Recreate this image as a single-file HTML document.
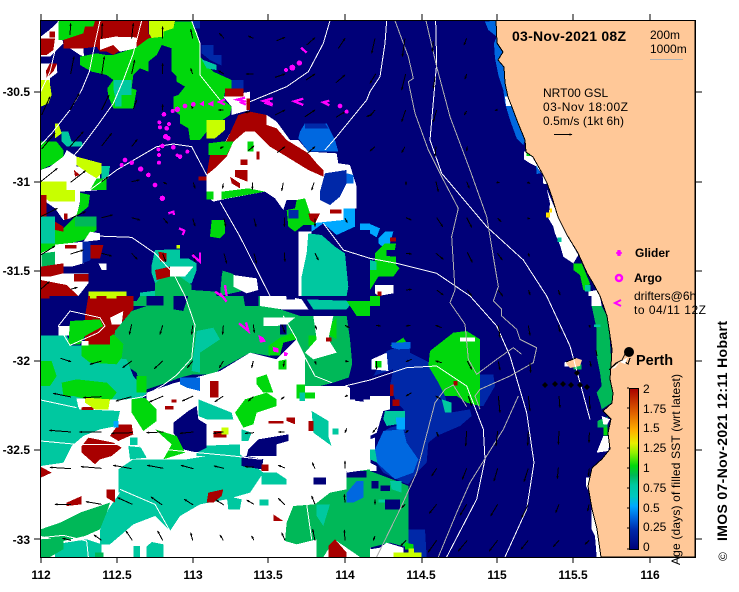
<!DOCTYPE html>
<html><head><meta charset="utf-8"><style>
html,body{margin:0;padding:0;background:#fff}
svg{display:block}
text{font-family:"Liberation Sans",sans-serif;font-size:12px;fill:#000}
.bd{font-weight:bold}
.n{fill:#000078}.b{fill:#0028a8}.u{fill:#0068e0}.c{fill:#00a8ff}.t{fill:#00c8a0}.m{fill:#00b858}.g{fill:#00d80c}.r{fill:#a80000}.l{fill:#c8ff00}.w{fill:#fff}.y{fill:#ffe000}
.map{shape-rendering:crispEdges}
.wl polyline{fill:none;stroke:#fff;stroke-width:3;shape-rendering:crispEdges}
.gl polyline{fill:none;stroke:#b0b0b0;stroke-width:3;shape-rendering:crispEdges}
.ar path{fill:none;stroke:#000;stroke-width:3;marker-end:url(#h);shape-rendering:crispEdges}
.mg circle,.mg polygon{fill:#ff00ff}
.mg polyline{fill:none;stroke:#ff00ff;stroke-width:7}
</style></head><body>
<svg width="739" height="592" viewBox="0 0 739 592" xmlns="http://www.w3.org/2000/svg">
<defs>
<marker id="h" markerWidth="3.2" markerHeight="2.4" refX="2.6" refY="1.2" orient="auto" markerUnits="strokeWidth"><path d="M0 0L3.2 1.2L0 2.4z" fill="#000"/></marker>
<clipPath id="cp"><rect x="41" y="20" width="654" height="537"/></clipPath>
<linearGradient id="cb" x1="0" y1="1" x2="0" y2="0">
<stop offset="0" stop-color="#000078"/><stop offset=".12" stop-color="#0028a8"/><stop offset=".2" stop-color="#0068e0"/><stop offset=".27" stop-color="#00a8ff"/><stop offset=".33" stop-color="#00c8c0"/><stop offset=".4" stop-color="#00c8a0"/><stop offset=".46" stop-color="#00b858"/><stop offset=".52" stop-color="#00d80c"/><stop offset=".6" stop-color="#90f000"/><stop offset=".66" stop-color="#e8f000"/><stop offset=".74" stop-color="#ffb000"/><stop offset=".85" stop-color="#e06000"/><stop offset="1" stop-color="#a80000"/>
</linearGradient>
</defs>
<rect width="739" height="592" fill="#fff"/>
<g clip-path="url(#cp)">
<rect x="41" y="20" width="654" height="537" class="n map"/>

<!-- Q1 -->
<g class="map" transform="scale(.33333)">
<polygon class="w" points="148,90 175,65 190,130 150,170 122,170 122,110"/>
<polygon class="r" points="122,115 165,115 160,150 140,165 122,165"/>
<polygon class="r" points="148,95 165,95 165,112 148,112"/>
<polygon class="w" points="122,190 170,190 172,218 150,235 150,265 122,265"/>
<polygon class="r" points="150,190 172,190 160,215 140,235 138,212"/>
<polygon class="l" points="122,240 148,240 155,285 145,310 122,320"/>
<polygon class="g" points="175,62 285,62 280,80 255,82 250,100 215,115 190,120 175,120"/>
<polygon class="r" points="190,120 250,100 255,80 280,80 285,62 445,62 445,100 455,115 410,140 390,125 385,150 355,155 340,165 320,155 300,155 290,140 250,145 190,145"/>
<polygon class="w" points="300,118 345,110 410,112 410,145 360,155 340,135 300,150"/>
<polygon class="w" points="210,145 250,145 252,170 240,165"/>
<polygon class="l" points="447,62 525,62 520,85 490,95 490,110 455,115 447,100"/>
<polygon class="g" points="445,115 490,110 490,95 520,85 525,65 575,65 590,95 600,130 600,170 640,215 695,240 695,265 675,275 670,300 695,320 690,345 660,365 625,365 620,395 600,420 570,420 565,385 540,370 540,345 520,330 520,290 535,285 555,260 530,245 530,230 515,215 515,145 485,135 470,165 445,185 445,215 420,205 400,225 395,265 410,270 400,325 365,325 340,325 325,290 322,265 340,240 320,225 275,215 240,195 240,170 265,165 290,160 320,165 340,165 385,150 405,145"/>
<polygon class="t" points="340,240 395,240 395,285 365,285 365,320 345,320 345,290 340,265"/>
<polygon class="b" points="605,135 640,135 640,165 665,165 665,197 630,180 605,160"/>
<polygon class="t" points="605,178 650,195 650,210 620,205"/>
<polygon class="b" points="695,240 730,240 730,265 695,265"/>
<polygon class="b" points="575,62 600,62 600,85 585,85"/>
<polygon class="w" points="620,590 620,525 690,400 720,345 800,345 830,365 870,420 895,420 925,455 1010,460 1015,490 1050,495 1070,560 1070,625 1030,625 1040,680 1010,705 970,670 935,670 945,640 930,640 915,595 890,600 860,600 850,630 825,595 795,575 670,598 640,605"/>
<polygon class="w" points="670,290 750,275 750,330 695,345 695,320"/>
<polygon class="r" points="675,265 730,265 730,290 675,290"/>
<polygon class="r" points="740,295 750,295 750,330 740,330"/>
<polygon class="r" points="620,525 630,465 675,430 690,400 715,345 750,335 800,345 800,375 830,385 860,420 925,460 950,490 970,510 970,530 925,510 860,470 810,440 765,395 735,395 700,425 680,470 650,500"/>
<polygon class="g" points="625,430 665,425 700,425 680,465 625,465"/>
<polygon class="l" points="620,360 675,360 675,390 645,415 620,415"/>
<polygon class="r" points="722,478 742,478 742,495 722,495"/>
<polygon class="r" points="705,510 742,510 742,545 705,530"/>
<polygon class="r" points="770,455 778,455 778,478 770,478"/>
<polygon class="r" points="595,530 620,530 620,542 595,542"/>
<polygon class="r" points="690,530 720,550 720,565 695,550"/>
<polygon class="g" points="742,425 760,425 760,455 742,455"/>
<polygon class="g" points="665,575 745,565 795,575 665,598"/>
<polygon class="g" points="620,575 640,575 640,598 620,598"/>
<polygon class="u" points="900,395 915,370 980,370 1005,420 1015,455 975,455 925,455 895,415"/>
<polygon class="b" points="915,370 975,370 985,385 915,385"/>
<polygon class="b" points="975,520 1040,510 1040,550 1020,590 990,615 960,600 960,575"/>
<polygon class="u" points="1040,520 1060,525 1060,550 1040,550"/>
<polygon class="c" points="1030,625 1065,625 1065,680 1010,705 970,670 935,695 935,670 1030,660"/>
<polygon class="g" points="860,630 885,625 890,600 915,595 930,640 955,640 945,675 910,675 885,695 865,680"/>
<polygon class="b" points="865,630 895,630 895,655 865,655"/>
<polygon class="r" points="925,640 960,640 945,670 930,660"/>
<polygon class="r" points="990,628 1025,628 1025,640 990,640"/>
<polygon class="w" points="895,695 935,695 920,760 905,830 905,888 895,888"/>
<polygon class="t" points="925,700 965,705 1005,740 1035,760 1045,860 1040,888 905,888 905,830 920,760"/>
<polygon class="c" points="1080,670 1110,670 1110,690 1080,690"/>
<polygon class="g" points="635,660 675,660 675,700 660,715 630,710"/>
<polygon class="g" points="122,425 170,425 190,450 190,490 165,490 122,510"/>
<polygon class="l" points="165,370 175,370 185,400 165,415"/>
<polygon class="t" points="185,395 205,395 215,425 245,425 250,440 200,440 185,425"/>
<polygon class="w" points="122,510 150,500 190,470 200,450 230,470 230,500 300,490 300,570 240,575 240,605 230,650 190,660 165,625 122,595"/>
<polygon class="l" points="230,470 305,490 305,520 290,535 265,520 230,495"/>
<polygon class="t" points="305,498 330,498 325,535 305,540"/>
<polygon class="g" points="290,535 320,535 320,570 270,570"/>
<polygon class="l" points="122,545 200,545 200,570 225,570 225,605 150,605 122,585"/>
<polygon class="g" points="240,578 270,585 265,620 228,650 240,610"/>
<polygon class="r" points="122,585 140,585 140,650 122,650"/>
<polygon class="r" points="222,510 240,525 225,530"/>
<polygon class="t" points="122,650 165,650 165,730 122,730"/>
<polygon class="g" points="165,675 190,685 225,650 290,650 290,690 250,720 190,735 165,735"/>
<polygon class="m" points="225,650 290,650 290,680 225,680"/>
<polygon class="r" points="165,665 190,680 190,695 165,690"/>
<polygon class="r" points="192,640 202,640 202,658 192,658"/>
<polygon class="w" points="122,760 155,735 250,725 270,695 300,700 300,720 255,725 250,790 215,800 122,800"/>
<polygon class="g" points="122,730 165,730 165,740 122,760"/>
<polygon class="m" points="125,760 165,755 165,800 125,800"/>
<polygon class="r" points="195,735 230,735 230,745 195,745"/>
<polygon class="r" points="122,800 190,790 190,820 150,830 122,830"/>
<polygon class="w" points="122,830 150,830 190,820 265,820 265,850 235,888 122,888"/>
<polygon class="r" points="222,822 265,822 265,845 222,845"/>
<polygon class="r" points="122,840 200,855 235,888 122,888"/>
<polygon class="r" points="265,735 310,735 300,775 265,775"/>
<polygon class="b" points="248,725 272,725 272,780 248,790"/>
<polygon class="w" points="295,790 320,790 320,810 305,810"/>
<polygon class="l" points="265,875 380,875 380,888 265,888"/>
<polygon class="t" points="465,750 540,748 540,775 565,775 590,790 590,810 575,850 465,850 455,820 455,795"/>
<polygon class="m" points="465,850 490,830 540,830 575,855 575,888 465,888"/>
<polygon class="r" points="475,755 500,760 500,785 480,785"/>
<polygon class="r" points="465,810 510,800 510,830 470,840"/>
<polygon class="w" points="510,800 580,800 555,830 510,830"/>
<polygon class="l" points="530,735 540,735 540,745 530,745"/>
<polygon class="m" points="575,870 650,875 650,888 575,888"/>
<polygon class="m" points="668,812 700,822 700,860 740,870 660,888 665,830"/>
<polygon class="w" points="700,825 770,835 775,870 740,880 700,860"/>
<polygon class="t" points="420,878 465,872 465,888 420,888"/>
</g>

<!-- Q2 -->
<g class="map" transform="translate(370,0) scale(.33333)">
<polygon class="c" points="0,672 30,685 20,712 0,700"/>
<polygon class="c" points="25,715 45,695 70,695 60,730 50,750 25,730"/>
<polygon class="r" points="60,713 78,713 78,725 60,725"/>
<polygon class="g" points="45,730 78,730 75,750 50,750 50,768 78,770 78,795 88,805 70,830 25,830 0,870 0,790 15,790 15,760"/>
<polygon class="t" points="0,780 20,785 20,810 0,810"/>
<polygon class="w" points="15,855 70,855 70,880 25,888 15,880"/>
<polygon class="r" points="22,875 35,875 35,888 22,888"/>
<polygon class="u" points="345,65 378,62 380,130 400,155 385,180 403,200 405,250 415,290 425,320 445,370 465,420 460,435 440,415 420,360 405,310 400,270 385,225 375,175 372,130 380,110 355,90"/>
<polygon class="w" points="405,290 418,290 425,318 408,318"/>
<polygon class="w" points="462,455 478,455 515,520 500,500 480,490 462,478"/>
<polygon class="g" points="470,455 482,455 482,468 470,468"/>
<polygon class="u" points="498,495 512,520 500,522"/>
<polygon class="w" points="518,530 528,530 530,552 520,552"/>
<polygon class="w" points="530,565 540,590 565,650 590,705 625,765 610,790 580,770 570,735 555,700 550,680 535,655 540,610"/>
<polygon class="y" points="528,638 540,638 540,652 528,652"/>
<polygon class="y" points="538,626 546,626 546,638 538,638"/>
<polygon class="t" points="562,712 574,712 574,726 562,726"/>
<polygon class="g" points="610,790 635,790 660,850 650,875 640,870 630,825 610,810"/>
<polygon class="w" points="655,875 680,870 690,888 655,888"/>
<polygon class="t" points="645,855 662,855 662,875 645,875"/>
</g>

<!-- Q3 -->
<g class="map" transform="translate(0,296) scale(.33333)">
<rect x="122" y="310" width="990" height="475" class="w"/>
<polygon class="n" points="122,0 260,0 260,40 175,90 175,115 122,115"/>
<polygon class="w" points="175,90 210,90 210,118 175,118"/>
<polygon class="r" points="265,0 400,0 400,40 365,80 365,110 330,145 255,145 255,60"/>
<polygon class="w" points="330,65 370,45 365,85 335,85"/>
<polygon class="l" points="270,0 290,0 290,8 270,8"/>
<polygon class="l" points="320,0 350,0 350,8 320,8"/>
<polygon class="r" points="122,0 148,0 148,8 122,8"/>
<polygon class="m" points="345,105 395,45 440,30 560,5 780,5 840,40 900,60 1040,60 1050,130 1060,240 1000,260 960,270 915,270 915,180 890,130 850,140 810,180 750,170 660,220 640,235 600,235 580,235 540,245 500,260 440,280 415,250 410,230 350,190 340,150"/>
<polygon class="m" points="400,0 780,0 780,30 400,30"/>
<polygon class="t" points="122,118 200,118 215,148 250,148 300,180 380,190 400,240 440,290 425,310 122,310"/>
<polygon class="g" points="122,195 155,195 170,240 150,270 122,270"/>
<polygon class="g" points="245,145 300,140 340,115 370,145 365,185 350,205 270,200 245,180"/>
<polygon class="g" points="210,75 300,70 310,90 255,120 240,145 205,145"/>
<polygon class="r" points="255,120 310,95 330,115 330,145 255,145"/>
<polygon class="w" points="245,135 265,135 265,148 245,148"/>
<polygon class="g" points="185,260 230,250 320,260 350,290 335,310 260,310 220,300 190,300"/>
<polygon class="g" points="410,240 440,240 440,290 410,290"/>
<polygon class="t" points="590,105 640,95 660,130 600,170 600,230 575,225 580,180"/>
<polygon class="t" points="920,10 1060,15 1040,40 940,40"/>
<polygon class="g" points="1040,15 1110,15 1110,60 1070,60"/>
<polygon class="g" points="985,90 1010,65 1010,130 985,115"/>
<polygon class="g" points="925,118 950,118 950,150 925,150"/>
<polygon class="g" points="805,150 840,125 880,110 890,130 850,140 840,178 805,178"/>
<polygon class="w" points="790,65 885,65 860,85 830,90 790,90"/>
<polygon class="w" points="780,0 855,0 905,10 925,40 845,40 780,30"/>
<polygon class="w" points="940,60 1000,60 985,130 1010,170 940,190 915,170 950,130"/>
<polygon class="r" points="978,125 995,125 995,137 978,137"/>
<polygon class="r" points="868,148 880,148 880,158 868,158"/>
<polygon class="w" points="660,225 750,170 830,190 890,130 915,180 915,270 960,270 1050,270 1050,310 660,310"/>
<polygon class="w" points="440,290 520,262 660,225 660,310 440,310"/>
<polygon class="g" points="835,195 860,190 860,220 835,220"/>
<polygon class="g" points="770,245 800,235 820,290 790,290 770,265"/>
<polygon class="g" points="890,265 915,265 915,290 945,290 945,308 890,308"/>
<polygon class="t" points="898,290 915,290 915,315 898,315"/>
<polygon class="n" points="1060,190 1110,100 1110,310 1040,270"/>
<polygon class="n" points="1065,310 1090,310 1090,340 1065,340"/>
<polygon class="n" points="1070,395 1100,395 1100,435 1060,435"/>
<polygon class="t" points="122,305 228,305 238,340 360,345 350,390 300,400 250,420 215,450 190,500 122,510"/>
<polygon class="t" points="390,425 412,425 412,447 390,447"/>
<polygon class="t" points="385,450 420,450 440,485 390,490"/>
<polygon class="t" points="355,590 355,520 400,490 560,490 650,475 720,450 720,475 790,530 750,590 680,610 600,625 540,660 510,705 465,660 400,685 320,700 305,710 300,690 325,640 360,590"/>
<polygon class="t" points="590,450 720,445 720,480 590,480"/>
<polygon class="t" points="785,530 830,530 860,550 860,565 785,565"/>
<polygon class="t" points="680,600 725,610 720,640 685,640"/>
<polygon class="t" points="778,610 805,610 805,628 778,628"/>
<polygon class="t" points="595,310 695,350 700,370 620,370 595,360"/>
<polygon class="t" points="725,400 755,410 745,435 725,435"/>
<polygon class="m" points="122,700 180,680 240,650 330,620 320,650 300,700 255,720 190,735 122,720"/>
<polygon class="t" points="165,745 260,730 305,745 305,783 165,783"/>
<polygon class="t" points="300,700 400,685 330,745 300,745"/>
<polygon class="m" points="122,730 190,725 190,760 150,783 122,783"/>
<polygon class="m" points="285,770 310,770 310,783 285,783"/>
<rect x="400" y="750" width="20" height="33" class="t"/>
<polygon class="t" points="440,752 455,738 490,745 490,783 440,783"/>
<polygon class="m" points="860,680 880,630 945,625 990,590 1040,580 1040,530 1110,520 1110,783 1080,783 1010,735 985,760 970,783 950,783 950,730 890,745 855,735"/>
<polygon class="u" points="1040,590 1070,555 1090,555 1090,605 1060,620 1040,620"/>
<polygon class="t" points="950,625 990,625 970,690 950,660"/>
<polygon class="n" points="1040,525 1100,525 1100,545 1040,545"/>
<polygon class="r" points="985,783 985,750 1005,730 1040,770 1040,783"/>
<polygon class="n" points="520,380 565,345 590,330 595,370 620,385 620,455 590,470 550,460 520,410"/>
<polygon class="g" points="395,310 435,305 470,340 470,375 430,405 395,350"/>
<polygon class="g" points="465,400 530,420 555,470 490,490 515,445"/>
<polygon class="g" points="705,350 735,310 800,290 830,310 830,330 770,350 760,385 730,395"/>
<polygon class="n" points="725,485 740,480 790,490 785,520 725,510"/>
<polygon class="n" points="740,480 745,460 775,430 865,415 865,435 830,445 830,480"/>
<polygon class="t" points="935,345 985,375 985,420 995,450 940,410"/>
<polygon class="t" points="998,397 1015,397 1015,415 998,415"/>
<polygon class="r" points="245,450 265,425 340,440 365,455 335,480 300,490 285,505 245,470"/>
<polygon class="r" points="355,385 395,385 400,415 355,435 330,420"/>
<polygon class="r" points="625,590 670,580 665,600 640,620 620,620"/>
<polygon class="r" points="320,580 345,580 345,620 320,605"/>
<polygon class="r" points="200,620 245,600 245,625 200,630"/>
<polygon class="r" points="122,512 155,530 122,545"/>
<polygon class="r" points="640,405 680,405 680,425 640,425"/>
<polygon class="r" points="805,375 850,375 850,383 805,383"/>
<polygon class="r" points="860,365 885,365 885,385 860,375"/>
<polygon class="r" points="925,375 940,375 940,405 925,405"/>
<polygon class="r" points="630,255 655,255 655,305 630,305"/>
<polygon class="r" points="495,330 520,330 520,340 495,340"/>
<polygon class="r" points="515,310 530,310 530,320 515,320"/>
<polygon class="r" points="820,655 850,675 820,675"/>
<polygon class="r" points="785,505 805,505 805,525 785,525"/>
<polygon class="r" points="245,333 280,333 280,342 245,342"/>
<polygon class="w" points="230,308 255,308 255,333 235,335"/>
<polygon class="w" points="330,312 395,312 395,345 360,345"/>
<polygon class="l" points="255,305 330,310 325,340 285,340 255,320"/>
<polygon class="l" points="665,395 685,395 685,415 665,415"/>
<polygon class="u" points="540,245 600,245 600,285 560,275 540,265"/>
<polygon class="c" points="340,375 355,375 355,395 340,395"/>
<polygon class="n" points="940,545 978,545 978,565 940,565"/>
<polygon class="n" points="440,0 490,0 490,28 440,28"/>
<polygon class="n" points="520,0 565,0 550,45 520,40"/>
<polygon class="n" points="730,0 775,0 775,30 735,30"/>
<polygon class="n" points="860,0 885,0 885,10 860,10"/>
<polygon class="n" points="840,85 860,85 860,115 840,115"/>
<polygon class="n" points="400,0 420,0 410,15 400,15"/>
<polygon class="w" points="1050,312 1110,320 1110,520 1040,530 1050,430"/>
</g>

<!-- Q4 -->
<g class="map" transform="translate(370,296) scale(.33333)">
<polygon class="g" points="0,0 30,0 30,30 0,30"/>
<polygon class="w" points="0,300 60,300 60,340 40,345 20,410 0,420"/>
<polygon class="b" points="50,165 120,140 120,170 180,200 205,260 225,300 240,350 300,340 305,360 270,390 200,420 175,440 170,500 140,530 115,565 100,560 40,530 20,500 15,460 40,405 60,395 100,385 100,340 80,320 60,270 70,220 10,240"/>
<polygon class="w" points="5,190 50,170 55,225 5,220"/>
<rect x="15" y="195" width="20" height="20" class="g"/>
<polygon class="g" points="60,150 100,125 110,140 80,150"/>
<polygon class="u" points="65,140 122,138 122,158 85,160 65,155"/>
<polygon class="b" points="330,235 370,235 375,270 340,330 330,330"/>
<polygon class="g" points="180,165 250,110 290,105 330,130 330,230 330,330 290,320 260,300 225,300 205,260 175,210"/>
<rect x="270" y="125" width="45" height="12" class="w"/>
<polygon class="t" points="215,310 245,320 245,350 225,350"/>
<polygon class="u" points="15,460 40,405 100,400 110,440 145,490 130,530 75,550 20,500"/>
<polygon class="t" points="45,345 105,345 105,365 80,385 50,390 40,370"/>
<polygon class="c" points="78,365 105,365 105,400 80,400"/>
<polygon class="m" points="0,525 80,555 115,570 115,700 115,755 60,740 0,755"/>
<polygon class="b" points="115,700 165,700 170,783 115,783"/>
<rect x="5" y="555" width="20" height="23" class="n"/>
<rect x="32" y="568" width="28" height="17" class="n"/>
<rect x="45" y="610" width="45" height="30" class="n"/>
<polygon class="t" points="60,555 95,555 95,590 65,580"/>
<polygon class="t" points="25,610 45,610 45,620 25,620"/>
<polygon class="w" points="0,500 20,510 20,525 0,525"/>
<polygon class="w" points="0,430 15,425 15,460 0,470"/>
<polygon class="t" points="0,460 15,460 22,500 0,490"/>
<polygon class="w" points="0,760 30,755 50,740 100,755 100,770 70,770 70,783 0,783"/>
<polygon class="g" points="105,740 130,745 130,760 105,760"/>
<polygon class="l" points="70,770 155,770 155,783 70,783"/>
<polygon class="l" points="115,758 132,758 132,770 115,770"/>
<rect x="60" y="265" width="10" height="35" class="r"/>
<rect x="68" y="310" width="20" height="20" class="r"/>
<rect x="250" y="255" width="12" height="13" class="r"/>
<polygon class="w" points="665,0 690,0 695,30 665,30"/>
<polygon class="m" points="665,30 695,30 715,70 720,140 725,210 725,250 730,290 725,320 695,340 690,320 680,290 695,270 690,230 680,180 680,100"/>
<rect x="672" y="85" width="20" height="8" class="t"/>
<polygon class="m" points="682,375 712,362 712,395 682,395"/>
<polygon class="g" points="700,395 712,395 712,418 700,418"/>
<polygon class="w" points="695,360 720,370 712,385 700,385"/>
<polygon class="w" points="700,420 722,420 715,465 680,470"/>
<polygon class="w" points="648,545 660,545 660,595 648,570"/>
<polygon class="w" points="665,640 680,700 692,783 680,783 675,720 665,700"/>
<polygon class="w" points="583,200 600,192 600,212 583,212"/>
<rect x="610" y="205" width="25" height="16" class="m"/>
</g>

<!-- land -->
<polygon fill="#ffc898" stroke="#000" stroke-width="1" shape-rendering="crispEdges" points="496,20 497,43 503,52 498,60 504,67 505,83 508,97 512,107 518,123 525,140 526,152 533,157 542,173 547,183 552,197 558,217 567,235 578,253 587,273 593,283 600,296 607,316 609,329 612,349 611,366 610,379 613,393 612,403 603,411 611,419 608,433 610,449 602,459 592,468 588,486 592,509 597,529 601,557 695,557 695,20"/>
<polygon fill="#ffc898" points="566,363 576,358 582,360 580,366 570,368"/>

<!-- contours -->
<g class="wl" transform="scale(.33333)">
<polyline points="175,62 168,140 150,215 122,275"/>
<polyline points="300,62 285,130 268,215 245,270 210,330 155,400 122,435"/>
<polyline points="425,62 400,160 370,240 340,310 290,380 245,440 210,480"/>
<polyline points="575,62 600,130 600,225 660,300"/>
<polyline points="750,305 860,260 925,215 970,130 990,62"/>
<polyline points="975,450 1010,410 1100,300 1110,275 1140,230 1155,130 1160,62"/>
<polyline points="270,570 350,510 470,440 520,432 575,440 620,525"/>
<polyline points="660,605 720,710 810,888"/>
<polyline points="290,708 395,712 465,760 520,820 555,888 585,975 575,1075 530,1125 490,1155 430,1190 350,1205"/>
<polyline points="970,670 1030,750 1110,775 1190,790 1310,820 1410,888 1490,978 1530,1068 1580,1238 1602,1388 1580,1528 1515,1671"/>
<polyline points="1307,62 1310,190 1290,420 1325,520 1460,680 1570,780 1640,888 1710,1038 1770,1258"/>
<polyline points="850,948 890,1018"/>
<polyline points="910,1063 945,1128 995,1148"/>
<polyline points="1035,1158 1110,1140 1220,1103 1310,1098 1400,1158 1450,1288 1455,1378 1430,1498 1340,1671"/>
</g>
<g class="wl" transform="translate(0,296) scale(.33333)">
<polyline points="175,90 210,45 300,65 315,90 295,110 210,148 175,90"/>
<polyline points="122,312 230,335"/>
<polyline points="122,435 230,445 350,445 540,465 700,480 785,490"/>
<polyline points="360,580 465,625 510,705"/>
<polyline points="122,725 190,718 260,735 265,783"/>
<polyline points="920,625 935,730"/>
</g>
<g class="gl" transform="translate(370,0) scale(.33333)">
<polyline points="75,62 115,170 130,235 115,245 135,340 175,450 215,530 265,625 245,710 255,870 240,908 285,973 295,1078 320,1123 380,1078 430,1043 455,1063"/>
<polyline points="168,62 200,200 240,350 300,510 350,650 385,860 370,903 395,928 395,948 440,988 450,1018 500,1043 490,1088 420,1128 330,1168 315,1188 330,1228"/>
<polyline points="445,1188 400,1288 300,1448 260,1538 205,1671"/>
<polyline points="225,1168 195,1208 140,1418 90,1528 20,1671"/>
<polyline points="225,1168 250,1155 290,1220"/>
</g>

<!-- arrows -->
<g class="ar" transform="scale(.33333)">
<path d="M210 105L212 70"/><path d="M305 115L307 70"/><path d="M395 115L400 70"/><path d="M487 115L488 80"/><path d="M578 115L572 88"/><path d="M672 115L658 100"/><path d="M760 115L745 108"/><path d="M830 122L855 112"/><path d="M920 135L945 113"/><path d="M1015 145L1035 115"/>
<path d="M212 222L222 170"/><path d="M305 225L313 170"/><path d="M395 222L404 180"/><path d="M488 222L488 190"/><path d="M578 222L572 205"/><path d="M672 222L655 212"/><path d="M760 222L738 222"/><path d="M825 232L855 222"/><path d="M918 240L945 222"/><path d="M1008 248L1035 225"/>
<path d="M125 345L150 290"/><path d="M210 330L238 280"/><path d="M305 330L327 285"/><path d="M400 327L410 300"/><path d="M488 332L488 313"/><path d="M578 325L575 318"/><path d="M670 330L655 330"/><path d="M750 335L735 338"/><path d="M825 345L855 330"/><path d="M915 350L945 330"/><path d="M1008 352L1035 335"/><path d="M1100 350L1110 345"/>
<path d="M125 447L165 400"/><path d="M210 440L250 395"/><path d="M305 438L335 400"/><path d="M395 440L412 418"/><path d="M660 445L670 440"/><path d="M745 452L762 438"/><path d="M832 458L855 440"/><path d="M922 460L945 440"/>
<path d="M122 545L172 505"/><path d="M212 547L257 512"/><path d="M305 545L325 530"/><path d="M395 545L418 540"/><path d="M490 547L500 552"/><path d="M580 548L585 565"/><path d="M670 550L668 565"/><path d="M757 548L757 568"/><path d="M850 548L845 572"/><path d="M942 548L935 570"/>
<path d="M122 650L172 625"/><path d="M212 655L257 635"/><path d="M305 653L338 645"/><path d="M395 653L420 660"/><path d="M490 655L503 670"/><path d="M578 655L585 678"/><path d="M672 655L677 680"/><path d="M762 655L768 680"/><path d="M853 653L853 680"/><path d="M945 655L945 680"/><path d="M1035 655L1042 668"/>
<path d="M122 765L165 738"/><path d="M212 762L250 750"/><path d="M305 760L335 768"/><path d="M395 760L412 778"/><path d="M488 760L497 785"/><path d="M580 760L585 785"/><path d="M672 760L680 790"/><path d="M762 760L770 790"/><path d="M853 758L855 785"/><path d="M945 760L955 780"/>
<path d="M122 868L148 845"/><path d="M212 868L232 862"/>
</g>
<g class="ar" transform="translate(370,0) scale(.33333)">
<path d="M15 115L5 160"/><path d="M105 115L97 170"/><path d="M190 125L187 155"/><path d="M290 115L282 135"/>
<path d="M17 222L0 250"/><path d="M107 222L95 270"/><path d="M195 230L190 265"/><path d="M290 222L285 237"/>
<path d="M15 330L0 348"/><path d="M107 330L95 365"/><path d="M200 330L190 365"/><path d="M290 333L283 345"/><path d="M380 330L375 331"/>
<path d="M15 440L0 453"/><path d="M105 440L95 458"/><path d="M198 440L195 470"/><path d="M292 440L290 453"/>
<path d="M108 545L108 555"/><path d="M198 545L205 575"/><path d="M290 545L298 565"/><path d="M380 547L388 548"/><path d="M472 547L480 550"/>
<path d="M108 653L124 660"/><path d="M200 653L218 680"/><path d="M290 653L305 682"/><path d="M383 655L393 665"/><path d="M472 655L480 656"/>
<path d="M108 760L125 762"/><path d="M198 760L220 778"/><path d="M292 757L307 787"/><path d="M382 760L397 780"/><path d="M475 760L478 770"/>
<path d="M108 870L125 868"/><path d="M200 870L220 885"/><path d="M292 870L305 888"/><path d="M385 870L398 888"/><path d="M476 870L480 885"/><path d="M565 870L570 885"/>
</g>
<g class="ar" transform="translate(0,296) scale(.33333)">
<path d="M395 85L388 115"/><path d="M488 88L480 115"/><path d="M578 88L575 115"/><path d="M670 88L668 115"/><path d="M760 85L763 110"/><path d="M845 85L855 110"/><path d="M945 88L950 100"/><path d="M1035 88L1048 95"/>
<path d="M182 187L213 197"/><path d="M305 195L270 205"/><path d="M395 195L368 215"/><path d="M488 195L463 218"/><path d="M578 195L562 215"/><path d="M670 195L658 215"/><path d="M760 195L755 215"/><path d="M853 195L850 212"/><path d="M945 195L948 205"/><path d="M1035 195L1045 197"/>
<path d="M213 303L160 292"/><path d="M305 302L250 305"/><path d="M395 302L348 315"/><path d="M490 300L448 318"/><path d="M580 300L547 315"/><path d="M670 300L645 317"/><path d="M760 302L745 315"/><path d="M853 302L843 310"/><path d="M1043 298L1035 302"/>
<path d="M213 408L148 403"/><path d="M305 408L238 408"/><path d="M397 410L335 412"/><path d="M490 408L440 410"/><path d="M580 408L540 412"/><path d="M670 408L640 412"/><path d="M762 410L735 412"/><path d="M853 408L835 408"/><path d="M1040 397L1035 410"/>
<path d="M213 518L150 514"/><path d="M305 517L243 512"/><path d="M395 518L340 508"/><path d="M490 517L442 508"/><path d="M580 518L543 508"/><path d="M672 517L642 510"/><path d="M762 513L735 512"/><path d="M855 516L835 508"/><path d="M945 518L937 500"/><path d="M1035 518L1035 495"/>
<path d="M213 625L165 625"/><path d="M305 625L258 617"/><path d="M397 625L353 605"/><path d="M487 627L453 603"/><path d="M580 627L553 610"/><path d="M672 627L648 612"/><path d="M762 625L740 612"/><path d="M855 627L835 607"/><path d="M945 625L935 600"/><path d="M1035 620L1033 595"/>
<path d="M213 733L188 727"/><path d="M305 733L282 717"/><path d="M397 733L378 705"/><path d="M488 733L473 705"/><path d="M578 733L572 710"/><path d="M670 733L660 717"/><path d="M762 733L755 720"/><path d="M855 733L845 710"/><path d="M945 733L938 700"/><path d="M1035 733L1033 702"/>
</g>
<g class="ar" transform="translate(370,296) scale(.33333)">
<path d="M18 88L32 90"/><path d="M122 88L108 90"/><path d="M215 95L197 88"/><path d="M385 88L390 125"/><path d="M475 88L480 118"/><path d="M565 88L570 108"/><path d="M658 88L660 95"/>
<path d="M20 195L20 220"/><path d="M125 190L108 197"/><path d="M215 200L197 195"/><path d="M292 195L305 220"/><path d="M385 197L390 222"/><path d="M480 200L482 230"/><path d="M660 195L663 212"/>
<path d="M125 290L108 300"/><path d="M213 310L197 300"/><path d="M295 300L305 330"/><path d="M385 300L390 350"/><path d="M475 300L480 345"/><path d="M567 300L570 335"/><path d="M658 300L660 340"/>
<path d="M20 395L8 410"/><path d="M115 403L107 410"/><path d="M200 408L205 422"/><path d="M290 405L287 450"/><path d="M383 405L378 450"/><path d="M475 408L473 448"/><path d="M567 405L565 445"/><path d="M658 410L657 440"/>
<path d="M200 517L185 540"/><path d="M290 517L277 550"/><path d="M383 517L372 555"/><path d="M475 517L462 557"/><path d="M565 515L562 548"/><path d="M658 517L655 540"/>
<path d="M15 610L15 625"/><path d="M105 625L95 635"/><path d="M200 625L178 652"/><path d="M290 625L270 658"/><path d="M383 625L362 660"/><path d="M475 625L455 665"/><path d="M567 625L557 650"/><path d="M657 625L653 645"/>
<path d="M15 720L10 733"/><path d="M108 733L92 750"/><path d="M200 733L175 768"/><path d="M292 733L265 765"/><path d="M383 733L358 765"/><path d="M475 733L453 760"/><path d="M567 733L550 752"/><path d="M657 733L645 745"/>
</g>

<!-- glider / drifter marks -->
<g class="mg map" transform="scale(.33333)">
<polyline points="903,143 920,158"/>
<circle cx="898" cy="189" r="8"/><circle cx="877" cy="203" r="9"/><circle cx="858" cy="210" r="6"/>
<circle cx="518" cy="333" r="6"/><circle cx="532" cy="328" r="8"/><circle cx="555" cy="318" r="7"/><circle cx="580" cy="313" r="7"/>
<polygon points="598,312 612,302 612,320"/><polygon points="622,312 640,302 640,320"/>
<polyline points="675,298 658,306 675,314"/>
<polyline points="735,293 712,299 735,305"/><polyline points="738,303 725,308 738,314"/>
<polyline points="818,295 790,303 818,312"/><polyline points="810,305 800,310 818,316"/>
<polyline points="910,296 883,304 910,315"/>
<polyline points="988,302 970,307 988,316"/>
<circle cx="1020" cy="318" r="7"/><circle cx="1040" cy="335" r="6"/>
<circle cx="492" cy="343" r="7"/><circle cx="478" cy="367" r="6"/><circle cx="480" cy="382" r="6"/><circle cx="507" cy="372" r="6"/><circle cx="500" cy="385" r="7"/><circle cx="497" cy="410" r="8"/><circle cx="505" cy="415" r="7"/><circle cx="487" cy="438" r="7"/><circle cx="520" cy="442" r="7"/><circle cx="475" cy="448" r="6"/><circle cx="477" cy="465" r="6"/><circle cx="477" cy="488" r="6"/><circle cx="540" cy="470" r="7"/><circle cx="532" cy="466" r="5"/><circle cx="562" cy="455" r="6"/>
<circle cx="375" cy="480" r="7"/><circle cx="365" cy="495" r="6"/><circle cx="395" cy="488" r="7"/><circle cx="422" cy="507" r="8"/><circle cx="445" cy="525" r="7"/><circle cx="465" cy="555" r="7"/><circle cx="487" cy="595" r="8"/>
<polyline points="505,640 520,635 522,645"/><polyline points="537,685 553,692 548,705"/>
<polyline points="577,765 600,785 600,757"/>
<polyline points="645,875 665,888"/><polyline points="675,855 680,888"/>
<polyline points="660,880 680,905"/>
<polyline points="717,970 745,993 738,967"/>
<polygon points="775,1005 790,1012 798,1025 780,1028"/>
<polygon points="818,1040 835,1045 835,1058 820,1055"/>
<polygon points="852,1055 865,1060 860,1068 852,1068"/>
</g>

<!-- Perth area details -->
<g fill="none" stroke="#000" stroke-width="1" shape-rendering="crispEdges">
<path d="M609 370L616 363L622 360L625 354"/>
<path d="M622 360L628 364L630 358"/>
<path d="M611 368L618 362"/>
<path d="M596 350l1 6"/>
<path d="M566 362l10 -4"/>
</g>
<path d="M611 369L620 362L628 357L625 364L620 362L615 368z" fill="#fff"/>
<g fill="#000">
<circle cx="629" cy="352" r="5"/>
<path d="M542 385l3-3 3 3-3 3zM552 384l3-3 3 3-3 3zM560 384l3-3 3 3-3 3zM568 385l3-3 3 3-3 3zM577 385l3-3 3 3-3 3zM584 387l3-3 3 3-3 3zM574 373l3-3 3 3-3 3z"/>
</g>
</g>

<!-- frame -->
<g stroke="#000" stroke-width="1" fill="none" shape-rendering="crispEdges">
<rect x="40.5" y="20.5" width="655" height="537"/>
<path d="M41 14v6M117 14v6M193 14v6M268 14v6M345 14v6M422 14v6M497 14v6M573 14v6M650 14v6"/>
<path d="M41 557v6M117 557v6M193 557v6M268 557v6M345 557v6M422 557v6M497 557v6M573 557v6M650 557v6"/>
<path d="M34 92h7M34 182h7M34 271h7M34 361h7M34 450h7M34 539h7"/>
<path d="M695 92h7M695 182h7M695 271h7M695 361h7M695 450h7M695 539h7"/>
</g>

<!-- axis labels -->
<text x="30" y="96" class="bd" text-anchor="end">-30.5</text>
<text x="30" y="186" class="bd" text-anchor="end">-31</text>
<text x="30" y="275" class="bd" text-anchor="end">-31.5</text>
<text x="30" y="365" class="bd" text-anchor="end">-32</text>
<text x="30" y="454" class="bd" text-anchor="end">-32.5</text>
<text x="30" y="544" class="bd" text-anchor="end">-33</text>
<g text-anchor="middle">
<text x="41" y="579" class="bd">112</text>
<text x="117" y="579" class="bd">112.5</text>
<text x="193" y="579" class="bd">113</text>
<text x="268" y="579" class="bd">113.5</text>
<text x="345" y="579" class="bd">114</text>
<text x="421" y="579" class="bd">114.5</text>
<text x="497" y="579" class="bd">115</text>
<text x="573" y="579" class="bd">115.5</text>
<text x="650" y="579" class="bd">116</text>
</g>

<!-- panel text -->
<text x="512" y="41" class="bd" style="font-size:14px" textLength="114">03-Nov-2021 08Z</text>
<text x="650" y="39">200m</text>
<text x="650" y="53">1000m</text>
<rect x="650" y="59" width="33" height="1" fill="#b0b0b0"/>
<text x="543" y="97">NRT00 GSL</text>
<text x="543" y="111" textLength="85">03-Nov 18:00Z</text>
<text x="543" y="125" textLength="81">0.5m/s (1kt 6h)</text>
<path d="M554 134.500H572" stroke="#000" stroke-width="1" marker-end="url(#h)" shape-rendering="crispEdges"/>
<path d="M619 250v6M616 253h6M618 251h2v4h-2z" stroke="#ff00ff" stroke-width="1.500" fill="none"/>
<text x="635" y="257" class="bd">Glider</text>
<circle cx="619" cy="278" r="3" fill="none" stroke="#ff00ff" stroke-width="2.500"/>
<text x="634" y="282" class="bd">Argo</text>
<polyline points="621,300 615,303 621,306" fill="none" stroke="#ff00ff" stroke-width="2"/>
<text x="634" y="300">drifters@6h</text>
<text x="634" y="314" textLength="72">to 04/11 12Z</text>
<text x="636" y="365" class="bd" style="font-size:14.500px">Perth</text>

<!-- colour bar -->
<rect x="629.500" y="388.500" width="9" height="161" fill="url(#cb)" stroke="#000" stroke-width="1" shape-rendering="crispEdges"/>
<g stroke="#000" shape-rendering="crispEdges"><path d="M627 388h2M627 408h2M627 428h2M627 448h2M627 468h2M627 488h2M627 508h2M627 528h2M627 549h2"/></g>
<text x="643" y="393">2</text>
<text x="643" y="413">1.75</text>
<text x="643" y="432">1.5</text>
<text x="643" y="452">1.25</text>
<text x="643" y="472">1</text>
<text x="643" y="492">0.75</text>
<text x="643" y="512">0.5</text>
<text x="643" y="531">0.25</text>
<text x="643" y="551">0</text>
<text transform="translate(680,565) rotate(-90)" textLength="191">Age (days) of filled SST (wrt latest)</text>
<text transform="translate(727,541) rotate(-90)" class="bd" style="font-size:14px" textLength="220">IMOS 07-Nov-2021 12:11 Hobart</text>
<text transform="translate(727,561) rotate(-90)">©</text>
</svg>
</body></html>
